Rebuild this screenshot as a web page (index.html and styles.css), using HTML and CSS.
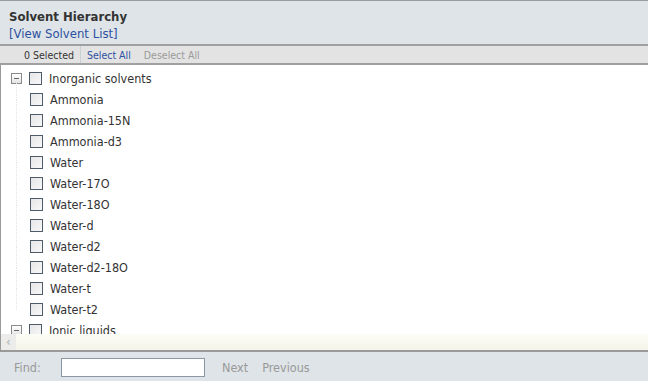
FILE: index.html
```html
<!DOCTYPE html>
<html lang="en">
  <head>
    <meta charset="UTF-8" />
    <title>Solvent Hierarchy</title>
    <link rel="stylesheet" href="styles.css">
  </head>
  <body>
    <div class="panel">
      <header class="panel-head">
        <div class="title">Solvent Hierarchy</div>
        <a class="link" href="#">[View Solvent List]</a>
      </header>

      <div class="toolbar">
        <span class="count">0 Selected</span>
        <span class="sep"></span>
        <a class="tool" href="#">Select All</a>
        <span class="tool disabled">Deselect All</span>
      </div>

      <div class="tree">
        <ul class="nodes">
          <li class="node root">
            <span class="toggle"></span><span class="check"></span>
            <span class="label">Inorganic solvents</span>
          </li>
          <li class="node child"><span class="check"></span><span class="label">Ammonia</span></li>
          <li class="node child"><span class="check"></span><span class="label">Ammonia-15N</span></li>
          <li class="node child"><span class="check"></span><span class="label">Ammonia-d3</span></li>
          <li class="node child"><span class="check"></span><span class="label">Water</span></li>
          <li class="node child"><span class="check"></span><span class="label">Water-17O</span></li>
          <li class="node child"><span class="check"></span><span class="label">Water-18O</span></li>
          <li class="node child"><span class="check"></span><span class="label">Water-d</span></li>
          <li class="node child"><span class="check"></span><span class="label">Water-d2</span></li>
          <li class="node child"><span class="check"></span><span class="label">Water-d2-18O</span></li>
          <li class="node child"><span class="check"></span><span class="label">Water-t</span></li>
          <li class="node child last"><span class="check"></span><span class="label">Water-t2</span></li>
          <li class="node root">
            <span class="toggle"></span><span class="check"></span>
            <span class="label">Ionic liquids</span>
          </li>
        </ul>
      </div>

      <div class="hscroll">
        <span class="arrow">&lsaquo;</span>
      </div>

      <footer class="finder">
        <label class="find-label" for="find">Find:</label>
        <input type="text" id="find" class="find-input" />
        <span class="find-btn">Next</span>
        <span class="find-btn">Previous</span>
      </footer>
    </div>
  </body>
</html>
```

FILE: styles.css
```css
body {
  margin: 0;
  font-family: Tahoma, "DejaVu Sans Condensed", "DejaVu Sans", sans-serif;
  font-size: 10.5px;
  color: #333;
  background: #fff;
}
.panel {
  width: 648px;
  height: 381px;
  display: flex;
  flex-direction: column;
  overflow: hidden;
}
.panel-head {
  background-color: #dfe4e8;
  border-top: 1px solid #9a9c9e;
  border-bottom: 2px solid #9ea0a2;
  padding: 8px 10px 2px 9px;
  height: 33px;
  box-sizing: content-box;
}
.title {
  font-weight: bold;
  font-size: 13px;
  color: #333;
  line-height: 16px;
}
.link {
  display: block;
  color: #2d50a0;
  font-size: 13px;
  line-height: 17px;
  text-decoration: none;
}
.toolbar {
  display: flex;
  align-items: center;
  height: 17px;
  background-color: #e3e3e3;
  border-bottom: 2px solid #a0a0a0;
  padding-left: 24px;
}
.count {
  color: #333;
}
.sep {
  width: 1px;
  height: 17px;
  background: #c8d0d8;
  margin: 0 6px 0 6px;
}
.tool {
  color: #2d50a0;
  text-decoration: none;
  margin-right: 13px;
}
.tool.disabled {
  color: #9a9a9a;
}
.tree {
  flex: 1;
  border-left: 1px solid #9a9a9a;
  overflow: hidden;
  background: #fff;
}
.nodes {
  margin: 0;
  padding: 3px 0 0 0;
  list-style-type: none;
}
.node {
  display: flex;
  align-items: center;
  height: 21px;
  position: relative;
  font-size: 12.5px;
}
.root {
  padding-left: 10px;
}
.child {
  padding-left: 29px;
}
.child::before {
  content: "";
  position: absolute;
  left: 15px;
  top: -10px;
  height: 21px;
  border-left: 1px dotted #e4e4e4;
}
.toggle {
  width: 9px;
  height: 9px;
  border: 1px solid #8a8a8a;
  background: linear-gradient(#ffffff, #e4e4e4);
  margin-right: 7px;
  position: relative;
}
.toggle::after {
  content: "";
  position: absolute;
  left: 2px;
  top: 4px;
  width: 5px;
  height: 1px;
  background: #666;
}
.check {
  width: 11px;
  height: 11px;
  border: 1px solid #4e5c6a;
  background: linear-gradient(135deg, #e6e6e6, #f8f8f8);
  margin-right: 7px;
}
.label {
  color: #333;
  white-space: nowrap;
}
.hscroll {
  height: 16px;
  background: linear-gradient(#fdfdf7, #f4f4ea);
  border-left: 1px solid #9a9a9a;
  display: flex;
}
.arrow {
  width: 15px;
  background: #ececea;
  color: #aaa;
  font-size: 12px;
  line-height: 16px;
  text-align: center;
}
.finder {
  display: flex;
  align-items: center;
  height: 31px;
  background-color: #dfe4e8;
  border-top: 2px solid #9a9a9a;
  padding: 2px 0 0 14px;
  box-sizing: border-box;
}
.find-label {
  color: #999;
  font-size: 12.5px;
  width: 47px;
}
.find-input {
  width: 140px;
  height: 17px;
  border: 1px solid #8a98a6;
  padding: 0 1px;
  margin: 0 17px 0 0;
}
.find-btn {
  color: #999;
  font-size: 12.5px;
  margin-right: 14px;
}
```
